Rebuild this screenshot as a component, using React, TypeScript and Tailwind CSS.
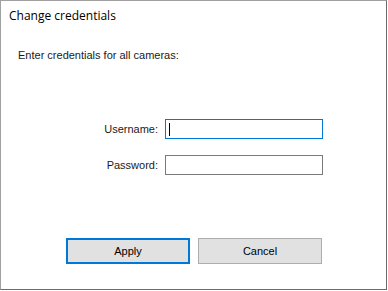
import React from 'react';

const FONT = { fontFamily: '"Liberation Sans", Arial, sans-serif' };

export default function App() {
  return (
    <div className="w-[388px] h-[291px] bg-white" style={FONT}>
      <div className="w-[387px] h-[290px] flex flex-col border-t border-l border-t-[#a0a0a0] border-l-[#a0a0a0] border-r border-b border-r-[#6b6b6b] border-b-[#6b6b6b] bg-white">
        {/* Title */}
        <div className="pl-[8px] pt-[7px] h-[23px] text-[12px] leading-[16px] text-black" style={{ fontFamily: '"Open Sans", "Noto Sans", sans-serif' }}>
          Change credentials
        </div>

        <div className="pl-[17px] mt-[25px] text-[11px] leading-[13px] text-[#1a1a1a]">
          Enter credentials for all cameras:
        </div>

        {/* Fields */}
        <div className="mt-[57px] flex flex-col gap-[16px]">
          <div className="flex items-center h-[20px]">
            <div className="w-[157px] text-right text-[11px] leading-[13px] text-[#1a1a1a]">Username:</div>
            <div className="ml-[7px] w-[158px] h-[20px] border border-[#0078d7] bg-white flex items-center pl-[3px]">
              <div className="w-[1px] h-[13px] bg-black" />
            </div>
          </div>
          <div className="flex items-center h-[20px]">
            <div className="w-[157px] text-right text-[11px] leading-[13px] text-[#1a1a1a]">Password:</div>
            <div className="ml-[7px] w-[158px] h-[20px] border border-[#7a7a7a] bg-white" />
          </div>
        </div>

        {/* Buttons */}
        <div className="mt-[63px] flex pl-[65px] gap-[8px]">
          <button className="w-[124px] h-[26px] border-2 border-[#0078d7] bg-[#e1e1e1] text-[11px] text-black">
            Apply
          </button>
          <button className="w-[124px] h-[26px] border border-[#adadad] bg-[#e1e1e1] text-[11px] text-black">
            Cancel
          </button>
        </div>
      </div>
    </div>
  );
}
